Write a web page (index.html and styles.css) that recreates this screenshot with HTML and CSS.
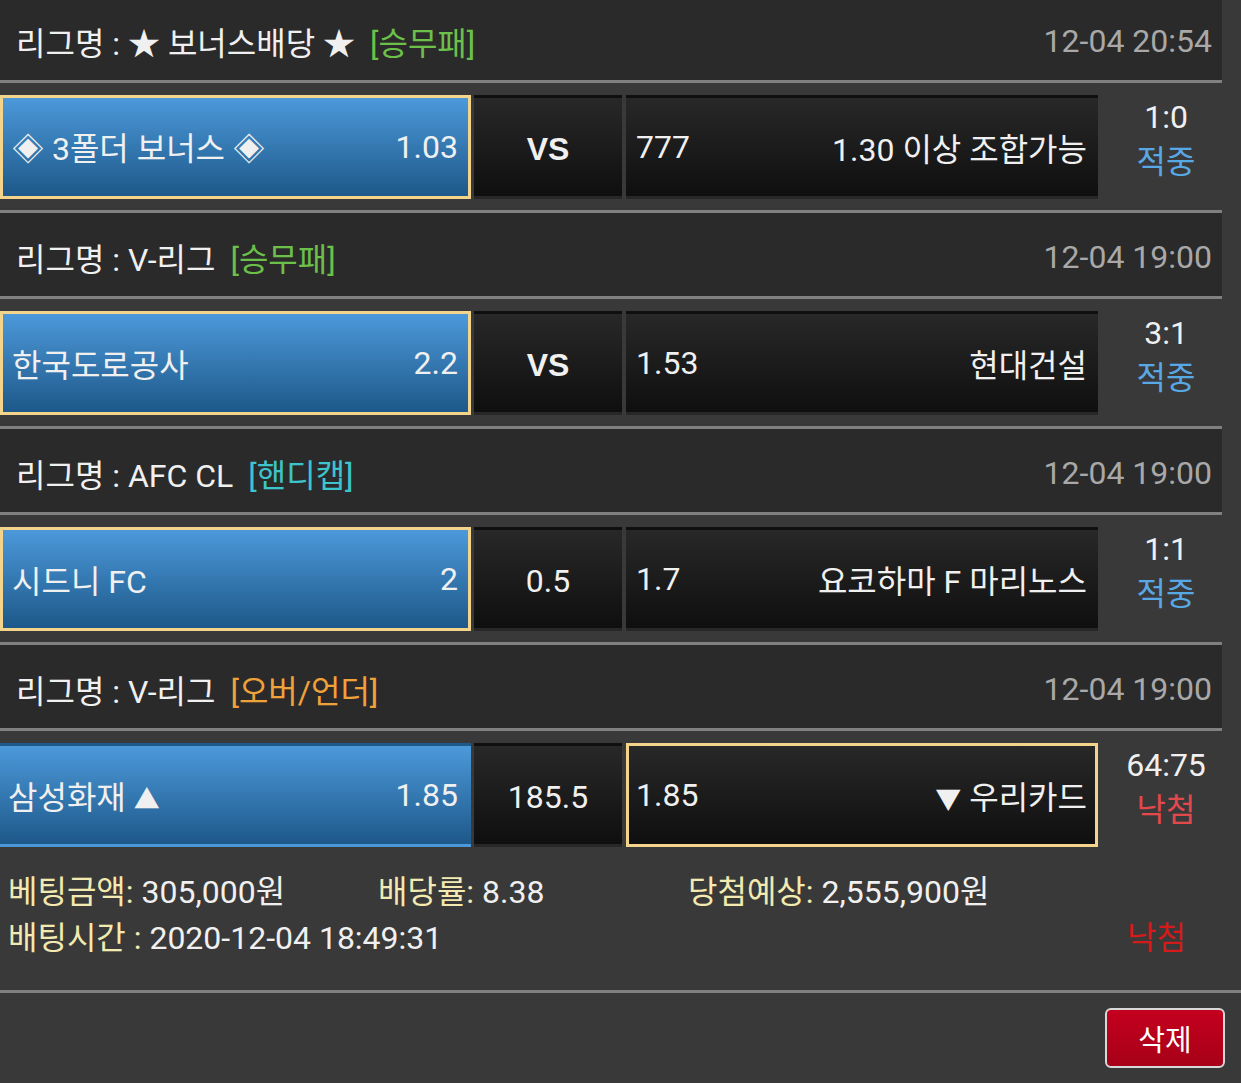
FILE: index.html
```html
<!doctype html>
<html lang="ko">
  <head>
    <meta charset="UTF-8" />
    <meta name="viewport" content="width=device-width, initial-scale=1.0" />
    <title>베팅내역</title>
    <link rel="stylesheet" href="styles.css">
  </head>
  <body>
    <div class="slip">
      <div class="match">
        <div class="league">
          <span class="name">리그명 : ★ 보너스배당 ★ <span class="type win">[승무패]</span></span>
          <span class="time">12-04 20:54</span>
        </div>
        <div class="game">
          <div class="cell home picked"><span>◈ 3폴더 보너스 ◈</span><span>1.03</span></div>
          <div class="cell mid vs">VS</div>
          <div class="cell away"><span>777</span><span>1.30 이상 조합가능</span></div>
          <div class="result"><span>1:0</span><span class="hit">적중</span></div>
        </div>
      </div>

      <div class="match">
        <div class="league">
          <span class="name">리그명 : V-리그 <span class="type win">[승무패]</span></span>
          <span class="time">12-04 19:00</span>
        </div>
        <div class="game">
          <div class="cell home picked"><span>한국도로공사</span><span>2.2</span></div>
          <div class="cell mid vs">VS</div>
          <div class="cell away"><span>1.53</span><span>현대건설</span></div>
          <div class="result"><span>3:1</span><span class="hit">적중</span></div>
        </div>
      </div>

      <div class="match">
        <div class="league">
          <span class="name">리그명 : AFC CL <span class="type handi">[핸디캡]</span></span>
          <span class="time">12-04 19:00</span>
        </div>
        <div class="game">
          <div class="cell home picked"><span>시드니 FC</span><span>2</span></div>
          <div class="cell mid">0.5</div>
          <div class="cell away"><span>1.7</span><span>요코하마 F 마리노스</span></div>
          <div class="result"><span>1:1</span><span class="hit">적중</span></div>
        </div>
      </div>

      <div class="match last">
        <div class="league">
          <span class="name">리그명 : V-리그 <span class="type over">[오버/언더]</span></span>
          <span class="time">12-04 19:00</span>
        </div>
        <div class="game">
          <div class="cell home"><span>삼성화재 <small class="arrow">▲</small></span><span>1.85</span></div>
          <div class="cell mid">185.5</div>
          <div class="cell away picked"><span>1.85</span><span><small class="arrow">▼</small> 우리카드</span></div>
          <div class="result"><span>64:75</span><span class="miss">낙첨</span></div>
        </div>
      </div>

      <div class="info">
        <div class="info-row">
          <span class="amount"><span class="label">베팅금액:</span> 305,000원</span>
          <span class="rate"><span class="label">배당률:</span> 8.38</span>
          <span><span class="label">당첨예상:</span> 2,555,900원</span>
        </div>
        <div class="info-row">
          <span><span class="label">배팅시간 :</span> 2020-12-04 18:49:31</span>
          <span class="status">낙첨</span>
        </div>
      </div>
    </div>

    <div class="footer">
      <button class="delete">삭제</button>
    </div>
  </body>
</html>
```

FILE: styles.css
```css
body {
  margin: 0;
  background-color: #393939;
  color: #f0f0f0;
  font-family: Roboto, "Noto Sans CJK KR", sans-serif;
  font-size: 32px;
  overflow: hidden;
}

.slip {
  margin-top: -3px;
}

.match {
  width: 1222px;
}

.league {
  height: 86px;
  display: flex;
  align-items: center;
  justify-content: space-between;
  padding: 4px 10px 0 16px;
  box-sizing: border-box;
  background-color: #2a2a2a;
  border-bottom: 3px solid #808080;
}

.type {
  margin-left: 7px;
}

.type.win {
  color: #6cc04a;
}

.type.handi {
  color: #3ec4cc;
}

.type.over {
  color: #f0a23a;
}

.time {
  color: #a8a8a8;
}

.game {
  height: 104px;
  padding: 12px 0 11px;
  display: flex;
  border-bottom: 3px solid #808080;
}

.last .game {
  border-bottom: none;
}

.cell {
  height: 104px;
  box-sizing: border-box;
  display: flex;
  align-items: center;
  justify-content: space-between;
  border: 3px solid transparent;
}

.home {
  width: 471px;
  padding: 0 10px 0 9px;
  background: linear-gradient(#4c99da, #1d5889);
}

.home:not(.picked) {
  padding-left: 5px;
}

.mid {
  width: 148px;
  margin-left: 3px;
  justify-content: center;
  padding-top: 4px;
  background: linear-gradient(#282828, #0f0f0f);
}

.vs {
  font-family: "Liberation Sans", sans-serif;
  font-weight: bold;
  font-size: 32px;
}

.away {
  width: 472px;
  margin-left: 4px;
  padding: 0 8px 0 7px;
  background: linear-gradient(#282828, #0f0f0f);
}

.cell.picked {
  border-color: #f3d48a;
}

.arrow {
  font-size: 26px;
}

.result {
  width: 124px;
  padding-left: 12px;
  box-sizing: border-box;
  display: flex;
  flex-direction: column;
  align-items: center;
  line-height: 45px;
}

.hit {
  color: #58a8e6;
}

.miss {
  color: #e2484c;
}

.info {
  width: 1222px;
  padding: 11px 0 29px 8px;
  box-sizing: border-box;
  font-size: 32px;
  line-height: 46px;
}

.info-row {
  display: flex;
}

.amount {
  width: 370px;
}

.rate {
  width: 310px;
}

.label {
  color: #f2eab0;
}

.status {
  margin-left: auto;
  margin-right: 36px;
  color: #d41a1a;
}

.footer {
  border-top: 3px solid #808080;
  display: flex;
  justify-content: flex-end;
  padding: 15px 16px 0 0;
}

.delete {
  width: 120px;
  height: 60px;
  border: 2px solid #d8d8d8;
  border-radius: 6px;
  background: linear-gradient(#c4001e, #a80018);
  color: white;
  font-family: "Noto Sans CJK KR", sans-serif;
  font-size: 29px;
  cursor: pointer;
}
```
